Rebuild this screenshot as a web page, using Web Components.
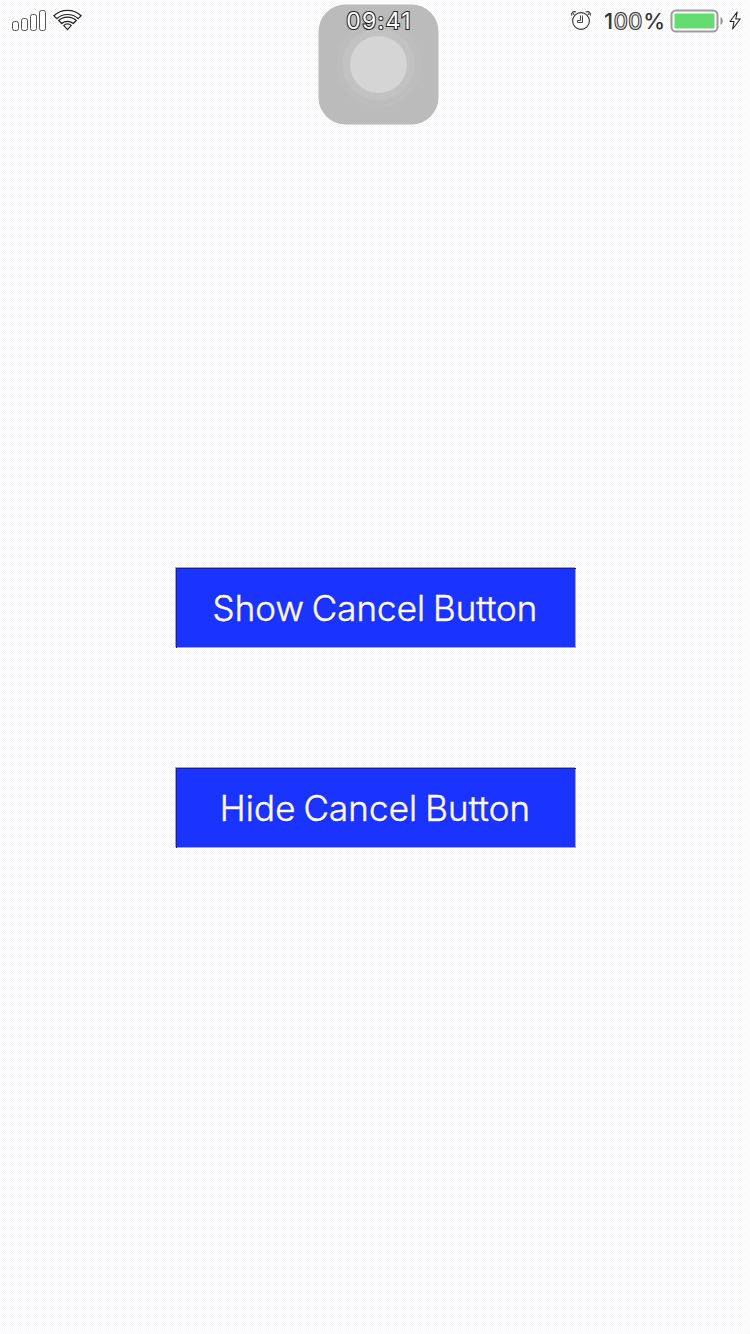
<!DOCTYPE html>
<html lang="en"><head><meta charset="utf-8"><title>Cancel Button</title>
<style>html,body{margin:0;height:100%;overflow:hidden}body{font-family:Inter,"Liberation Sans",sans-serif}</style></head>
<body>
<phone-screen>
  <status-bar slot="status"></status-bar>
  <action-button>Show Cancel Button</action-button>
  <action-button style="--spacing:.08px">Hide Cancel Button</action-button>
  <assistive-touch slot="overlay"></assistive-touch>
</phone-screen>
<script>
const define=(name,html)=>customElements.define(name,class extends HTMLElement{
  constructor(){super();this.attachShadow({mode:'open'}).innerHTML=html;}
});
define('phone-screen',`<style>
:host{display:flex;flex-direction:column;position:relative;width:750px;height:1334px;overflow:hidden;background:repeating-conic-gradient(#fff 0 25%,#f7f7f9 0 50%) 0 0/2px 2px}
main{display:flex;flex-direction:column;align-items:center;gap:120px;padding:528px 0 0 1px}
</style><slot name="overlay"></slot><slot name="status"></slot><main><slot></slot></main>`);
define('action-button',`<style>
:host{display:block}
button{display:flex;align-items:center;justify-content:center;box-sizing:border-box;width:400px;height:80px;margin:0;padding:0 1px 1px 0;border:0;border-radius:0;background:#1a33ff;box-shadow:inset 1px 1px #20236f,inset -1px -1px #969eff,-1px -1px #a3a3a3;color:#f8f6ff;font:300 35px/44px Inter,"Liberation Sans",sans-serif;letter-spacing:var(--spacing,0);word-spacing:-2px;-webkit-text-stroke:.5px #f8f6ff;text-shadow:1px 1px #25286f;white-space:nowrap}
</style><button type="button"><slot></slot></button>`);
define('assistive-touch',`<style>
:host{position:absolute;left:318px;top:4px;width:121px;height:121px}
svg{display:block}
</style><svg width="121" height="121" viewBox="0 0 121 121">
<defs><pattern id="d" width="2" height="2" patternUnits="userSpaceOnUse"><path d="M0 0h1v1H0zM1 1h1v1H1z" fill="#fff" fill-opacity=".09"/></pattern></defs>
<rect x=".5" y=".5" width="120" height="120" rx="27" fill="#b8b8b8"/>
<circle cx="60.5" cy="60.5" r="43" fill="#bababa"/><circle cx="60.5" cy="60.5" r="36" fill="#bfbfbf"/><circle cx="60.5" cy="60.5" r="28.5" fill="#d3d3d3"/>
<rect x=".5" y=".5" width="120" height="120" rx="27" fill="url(#d)"/></svg>`);
define('signal-icon',`<style>:host{display:block}svg{display:block}</style>
<svg width="36" height="24" viewBox="11 9 36 24" fill="#fff" stroke="#555" stroke-width="1"><rect x="12.5" y="21.5" width="6" height="9" rx="2"/><rect x="21.5" y="18.5" width="6" height="12" rx="2"/><rect x="30.5" y="14.5" width="6" height="16" rx="2"/><rect x="39.5" y="10.5" width="6" height="20" rx="2"/></svg>`);
define('wifi-icon',`<style>:host{display:block}svg{display:block}</style>
<svg width="30" height="24" viewBox="53 8 30 24" fill="#fff" stroke="#222" stroke-width="1.2" stroke-linejoin="round"><path d="M53.8 15.7Q59.5 10.3 67.5 10.3T81.2 15.7L78.2 18.7Q73.8 14.5 67.5 14.5T56.8 18.7Z"/><path d="M58.7 20.5Q62.4 17.1 67.5 17.1T76.3 20.5L73.3 23.5Q70.8 21.3 67.5 21.3T61.7 23.5Z"/><path d="M63.7 25.4Q67.5 22.3 71.3 25.4L67.5 29.7Z"/></svg>`);
define('alarm-icon',`<style>:host{display:block}svg{display:block}</style>
<svg width="22" height="22" viewBox="570 9 22 22" fill="none" stroke="#333" stroke-width="1.1"><circle cx="581" cy="21" r="8.4" fill="#fff"/><path d="M582.5 15.5V22.5H577.5V20.5H580.5V15.5" stroke-width=".9"/><path d="M571.8 15.5C570.9 13 573 10.8 576 12M590.2 15.5C591.1 13 589 10.8 586 12" fill="#fff"/><path d="M574.2 14.5l-1.5-1M587.8 14.5l1.5-1" /></svg>`);
define('battery-icon',`<style>:host{display:block}svg{display:block}</style>
<svg width="56" height="26" viewBox="669 8 56 26"><rect x="671.5" y="10.5" width="46" height="21" rx="4.5" fill="#fff" stroke="#9c9c9c" stroke-width="2"/><rect x="674.5" y="13.5" width="40" height="15" rx="1" fill="#64dc70"/><path d="M720.5 17.2c3 .8 3 6.8 0 7.6z" fill="#929292"/></svg>`);
define('charging-icon',`<style>:host{display:block}svg{display:block}</style>
<svg width="14" height="20" viewBox="728 10 14 20"><path d="M737.2 12L730 21.5h4l-1.4 7.5 7.6-10h-4.4z" fill="#fff" stroke="#222" stroke-width="1.1" stroke-linejoin="round"/></svg>`);
define('status-bar',`<style>
:host{display:grid;grid-template-columns:318px 121px 311px;height:40px;position:relative;color:#333;font:500 22px/28px Inter,"Liberation Sans",sans-serif}
div{display:flex;align-items:flex-start;box-sizing:border-box}
.left{padding:9px 0 0 11px;gap:6px}.left wifi-icon{margin-top:-1px}
.center{justify-content:center;padding-top:7px}
time{font-size:23px;font-weight:400;letter-spacing:1.3px;margin-left:1px;color:#fff;-webkit-text-stroke:2px #222;paint-order:stroke fill}
.right{padding-left:131px}
alarm-icon{margin-top:9px}.charge{margin:7px 0 0 12px;width:61px;white-space:nowrap;letter-spacing:.8px}
battery-icon{margin:8px 0 0 4px}charging-icon{margin:10px 0 0 3px}
.zero{color:#ddd;-webkit-text-stroke:2px #333;paint-order:stroke fill;font-weight:300;letter-spacing:1px}
</style><div class="left"><signal-icon></signal-icon><wifi-icon></wifi-icon></div><div class="center"><time>09:41</time></div><div class="right"><alarm-icon></alarm-icon><span class="charge">1<span class="zero">00</span>%</span><battery-icon></battery-icon><charging-icon></charging-icon></div>`);
</script></body></html>
